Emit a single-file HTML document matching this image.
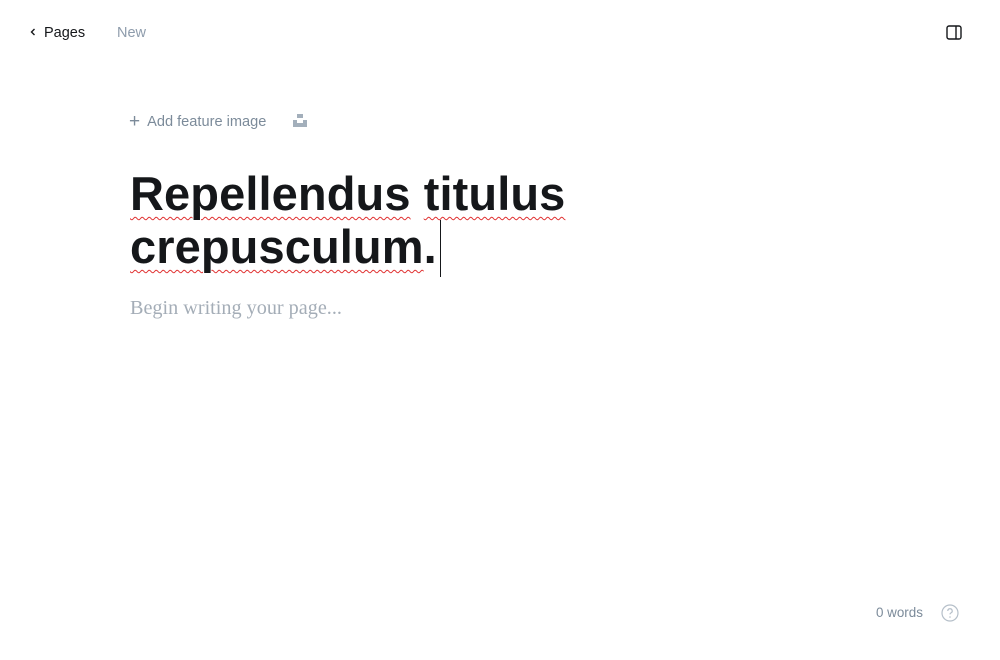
<!DOCTYPE html>
<html><head><style>
body{margin:0;width:1000px;height:660px;background:#fff;font-family:"Liberation Sans",sans-serif;position:relative;overflow:hidden}
.a{position:absolute;white-space:nowrap}
</style></head><body>
<div class="a" style="left:29px;top:25px;font-size:14.5px;color:#15171a"><svg width="8" height="10" style="margin-right:7px" viewBox="0 0 8 10"><path d="M5.5 2L2.5 5L5.5 8" stroke="#15171a" stroke-width="1.4" fill="none"/></svg>Pages</div>
<div class="a" style="left:117px;top:25px;font-size:14.5px;color:#8e9cac">New</div>
<svg class="a" style="left:946px;top:25px" width="16" height="15" viewBox="0 0 16 15"><rect x="1" y="1" width="14" height="13" rx="2" fill="none" stroke="#15171a" stroke-width="1.4"/><line x1="10" y1="1" x2="10" y2="14" stroke="#15171a" stroke-width="1.4"/></svg>
<div class="a" style="left:129px;top:110px;font-size:14.6px;color:#7c8b9a"><span style="font-size:19px;position:relative;top:1px;margin-right:7px">+</span>Add feature image</div>
<svg class="a" style="left:293px;top:114px" width="14" height="13" viewBox="0 0 14 13"><rect x="4" y="0" width="6" height="4" fill="#a3afbb"/><path d="M0 6h4v3h6V6h4v7H0z" fill="#a3afbb"/></svg>
<div class="a" style="left:130px;top:167px;font-size:47px;line-height:53px;font-weight:bold;color:#15171a;letter-spacing:0.1px"><span style="text-decoration:underline wavy #e03030;text-decoration-thickness:1px;text-underline-offset:6px">Repellendus</span> <span style="text-decoration:underline wavy #e03030;text-decoration-thickness:1px;text-underline-offset:6px">titulus</span><br><span style="text-decoration:underline wavy #e03030;text-decoration-thickness:1px;text-underline-offset:6px">crepusculum</span>.</div>
<div class="a" style="left:440px;top:220px;width:1px;height:57px;background:#15171a"></div>
<div class="a" style="left:130px;top:297px;font-size:20.2px;font-family:'Liberation Serif',serif;color:#a4adb7">Begin writing your page...</div>
<div class="a" style="left:876px;top:605px;font-size:13.4px;color:#7c8b9a">0 words</div>
<svg class="a" style="left:941px;top:604px" width="18" height="18" viewBox="0 0 18 18"><circle cx="9" cy="9" r="8" fill="none" stroke="#b5bfc9" stroke-width="1.2"/><path d="M6.8 7a2.2 2.2 0 1 1 3 2c-.6.3-.8.7-.8 1.4" fill="none" stroke="#b5bfc9" stroke-width="1.2"/><circle cx="9" cy="13" r=".8" fill="#b5bfc9"/></svg>
</body></html>
